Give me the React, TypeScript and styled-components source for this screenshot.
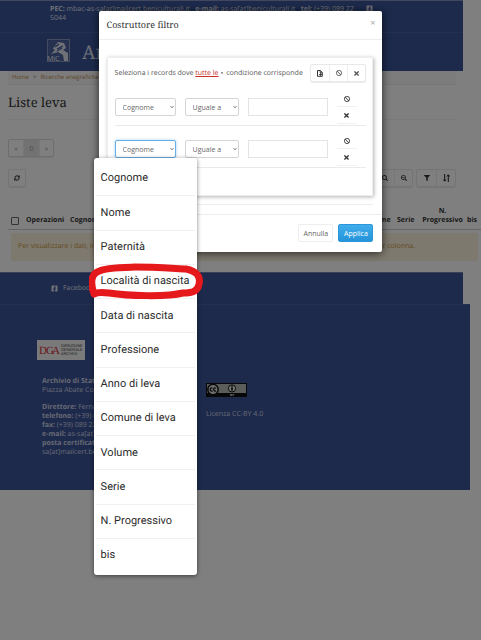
import React from "react";
import styled, { createGlobalStyle, css } from "styled-components";
import {
  FaBan,
  FaCaretDown,
  FaChevronDown,
  FaFacebookSquare,
  FaFilter,
  FaSearch,
  FaSearchMinus,
  FaTimes,
} from "react-icons/fa";
import { LuRefreshCw } from "react-icons/lu";

const Global = createGlobalStyle`
  *, *::before, *::after { box-sizing: border-box; }
  body {
    margin: 0;
    background: #fff;
    color: #333;
    font: 7px/9px "Open Sans", sans-serif;
    text-rendering: geometricPrecision;
  }
  h1, h2, p, ul { margin: 0; padding: 0; font-weight: 400; }
  button, input, select { font: inherit; color: inherit; margin: 0; }
  a { color: inherit; text-decoration: none; }
  svg { display: block; flex: none; }
`;

const serif = css`
  font-family: "Noto Serif", "DejaVu Serif", serif;
`;

const Page = styled.div`
  position: relative;
  min-height: 100vh;
  overflow: hidden;
`;

const Header = styled.header`
  margin-right: 18px;
  background: #3b5499;
  color: #dde1ec;
  border-top: 1px solid #8290bb;
`;

const Contacts = styled.div`
  display: flex;
  justify-content: space-between;
  height: 32px;
  padding: 4px 90px 0 50px;
  border-bottom: 1px solid #48609f;
`;

const ContactText = styled.p`
  max-width: 304px;
`;

const Brand = styled.div`
  display: flex;
  align-items: center;
  gap: 12px;
  height: 38px;
  padding: 0 0 4px 47px;
`;

const SiteName = styled.span`
  ${serif}
  font-size: 19px;
  line-height: 24px;
  padding-top: 3px;
`;

const Crumbs = styled.nav`
  display: flex;
  gap: 4px;
  align-items: center;
  height: 14px;
  margin: 0 25px 0 8px;
  padding-left: 4px;
  background: #f8f8f8;
  border-bottom: 1px solid #eee;
  color: #777;
  font-size: 6px;
  a { color: #c28a50; }
`;

const Content = styled.main`
  padding: 0 0 11px 8px;
`;

const PageTitle = styled.h1`
  ${serif}
  height: 35px;
  margin-right: 25px;
  padding-top: 7px;
  font-size: 13px;
  line-height: 20px;
  border-bottom: 1px solid #f2f2f2;
`;

const Bar = styled.div<{ $top: number }>`
  display: flex;
  gap: 3px;
  margin: ${(p) => p.$top}px 25px 0 0;
`;

const Group = styled.div<{ $end?: boolean }>`
  display: flex;
  margin-left: ${(p) => (p.$end ? "auto" : "0")};
  border: 1px solid #e8e8e8;
  border-radius: 2px;
  box-shadow: 0 1px 1px rgba(0, 0, 0, 0.08);
`;

const ToolButton = styled.button<{ $width?: number; $active?: boolean }>`
  display: flex;
  align-items: center;
  justify-content: center;
  width: ${(p) => p.$width ?? 18}px;
  height: 16px;
  padding: 0;
  border: 0;
  background: ${(p) => (p.$active ? "#e4e4e4" : "transparent")};
  & + & { border-left: 1px solid #eee; }
`;

const Pager = styled(Group)`
  border-color: #dcdcdc;
  color: #999;
`;

const Results = styled.table`
  width: 100%;
  margin-top: 18px;
  border-collapse: collapse;
  table-layout: fixed;
  th {
    height: 24px;
    padding: 0 0 4px;
    vertical-align: bottom;
    text-align: left;
    font-weight: 700;
    line-height: 9px;
    border-bottom: 1px solid #ccc;
  }
  th.center { text-align: center; }
  td { padding: 3px 3px 0; }
`;

const Tick = styled.input`
  appearance: none;
  display: block;
  width: 8px;
  height: 8px;
  margin-left: 3px;
  border: 1px solid #666;
  border-radius: 1px;
`;

const Notice = styled.p`
  display: flex;
  justify-content: space-between;
  height: 28px;
  padding: 9px 63px 0 7px;
  background: #fcf3dc;
  border-radius: 2px;
  color: #c9963f;
`;

const Social = styled.div`
  display: flex;
  align-items: center;
  height: 32px;
  margin-right: 18px;
  padding-left: 51px;
  background: #3b5499;
  border-top: 1px solid #7482ad;
  color: #dde1ec;
  a { display: flex; align-items: center; gap: 5px; }
`;

const Footer = styled.footer`
  display: grid;
  grid-template-columns: 164px 1fr;
  margin-right: 11px;
  height: 186px;
  padding: 35px 0 0 42px;
  background: #3b5499;
  border-top: 1px solid #4a61a2;
  color: #cdd3e4;
`;

const DgaLogo = styled.svg`
  margin: 0 0 17px -5px;
`;

const Address = styled.address`
  font-style: normal;
  white-space: nowrap;
  p + p { margin-top: 8px; }
`;

const License = styled.div`
  padding-top: 43px;
  p { margin-top: 13px; }
`;

const Backdrop = styled.div`
  position: absolute;
  inset: 0;
  display: flex;
  justify-content: center;
  align-items: flex-start;
  padding-top: 11px;
  background: rgba(0, 0, 0, 0.5);
`;

const Dialog = styled.section`
  width: 59%;
  background: #fff;
  border-radius: 2px;
  box-shadow: 0 1px 8px rgba(0, 0, 0, 0.7);
`;

const DialogHead = styled.header`
  display: flex;
  justify-content: space-between;
  height: 29px;
  padding: 7px 7px 0 8px;
  border-bottom: 1px solid #eee;
`;

const DialogTitle = styled.h2`
  ${serif}
  font-size: 9px;
  line-height: 14px;
`;

const Close = styled.button`
  height: 9px;
  padding: 0;
  border: 0;
  background: none;
  color: #aaa;
  font-size: 9px;
`;

const DialogBody = styled.div`
  padding: 17px 9px 0 8px;
`;

const Builder = styled.div`
  height: 139px;
  padding: 6px 6px 0 7px;
  border: 1px solid #eee;
  box-shadow: 1px 1px 4px rgba(0, 0, 0, 0.3);
`;

const Rule = styled.hr`
  margin: 8px 0 0;
  border: 0;
  border-top: 1px solid #eee;
`;

const Sentence = styled.div`
  display: flex;
  align-items: center;
  justify-content: space-between;
  height: 18px;
  margin-bottom: 2px;
  color: #555;
  a {
    color: #c9302c;
    text-decoration: underline;
  }
  span > svg { display: inline-block; color: #333; }
`;

const Condition = styled.div`
  display: grid;
  grid-template-columns: 61px 54px 80px 18px;
  column-gap: 9px;
  align-items: end;
  height: 42px;
  padding-bottom: 9px;
  border-bottom: 1px solid #eaeaea;
`;

const Field = styled.div`
  position: relative;
  color: #666;
  & > svg {
    position: absolute;
    right: 2px;
    top: 7px;
    pointer-events: none;
  }
`;

const Picker = styled.select<{ $focus?: boolean }>`
  appearance: none;
  display: block;
  width: 100%;
  height: 18px;
  padding: 0 7px;
  border: 1px solid ${(p) => (p.$focus ? "#66afe9" : "#d5d5d5")};
  border-radius: 2px;
  background: #fff;
  outline: 0;
  box-shadow: ${(p) => (p.$focus ? "0 0 3px rgba(102,175,233,.6)" : "none")};
`;

const Value = styled.input`
  width: 100%;
  height: 18px;
  padding: 0 4px;
  border: 1px solid #e4e4e4;
  background: #fff;
`;

const RowActions = styled.div`
  display: grid;
  gap: 1px;
  margin: 0 0 -8px;
`;

const MiniButton = styled.button`
  display: flex;
  align-items: center;
  justify-content: center;
  width: 20px;
  height: 16px;
  padding: 0;
  border: 0;
  border-bottom: 1px solid #f1f1f1;
  background: none;
`;

const DialogFoot = styled.footer`
  display: flex;
  justify-content: flex-end;
  gap: 5px;
  height: 38px;
  margin-top: 9px;
  padding: 9px 9px 0 0;
  border-top: 1px solid #eee;
`;

const Action = styled.button<{ $primary?: boolean }>`
  width: 35px;
  height: 18px;
  padding: 0;
  border: 1px solid ${(p) => (p.$primary ? "#2b97da" : "#eee")};
  border-radius: 2px;
  background: ${(p) => (p.$primary ? "linear-gradient(#41adec, #2593da)" : "#fff")};
  color: ${(p) => (p.$primary ? "#fff" : "#666")};
`;

const Options = styled.ul`
  position: absolute;
  z-index: 2;
  top: 18px;
  left: -21px;
  display: grid;
  grid-auto-rows: 1fr;
  width: 103px;
  height: 417px;
  padding: 3px 2px;
  border-radius: 3px;
  background: #fff;
  box-shadow: 0 1px 4px rgba(0, 0, 0, 0.5);
  list-style: none;
`;

const Option = styled.li`
  position: relative;
  display: flex;
  align-items: center;
  padding-left: 5px;
  color: #2c2c2c;
  font: 11px/14px Roboto, sans-serif;
  white-space: nowrap;
  & + & { border-top: 1px solid #f0f0f0; }
`;

const Marker = styled.svg`
  position: absolute;
  z-index: 1;
  left: -7px;
  top: -2px;
`;

const fields = [
  "Cognome", "Nome", "Paternità", "Località di nascita", "Data di nascita", "Professione",
  "Anno di leva", "Comune di leva", "Volume", "Serie", "N. Progressivo", "bis",
];

const MicMark = () => (
  <svg width="23" height="23" viewBox="0 0 23 23" aria-label="MiC">
    <rect x="0.5" y="0.5" width="22" height="22" fill="#4b629f" stroke="#8997be" />
    <path d="M7 8 11 3l6 1 2 5-3 2 5 3v8h-4l-1-6-5-3-7 2 4-4-2-1z" fill="#dfe3ee" />
    <path d="m8 8 4-3m-2 5 6-3m-6 5 5-3" stroke="#3b5499" strokeWidth="1.2" />
    <text x="0" y="22" fontSize="7" fontFamily="Open Sans, sans-serif" fill="#f1f3f8">MiC</text>
  </svg>
);

const Dga = () => (
  <DgaLogo width="48" height="20" viewBox="0 0 48 20" aria-label="DGA Direzione Generale Archivi">
    <rect width="48" height="20" fill="#f5f5f5" />
    <g fontSize="11" fontFamily="Liberation Serif, serif" fill="#d4303a">
      <text x="2" y="14">D</text>
      <text x="9" y="14">G</text>
      <text x="15" y="14">A</text>
    </g>
    <g fontSize="4" fontFamily="Liberation Sans, sans-serif" fill="#333">
      <text x="24" y="7">DIREZIONE</text>
      <text x="24" y="11">GENERALE</text>
      <text x="24" y="15">ARCHIVI</text>
    </g>
  </DgaLogo>
);

const CcBadge = () => (
  <svg width="41" height="14" viewBox="0 0 41 14" aria-label="Creative Commons BY">
    <rect width="41" height="14" fill="#111" />
    <rect x="1" y="1" width="39" height="9" fill="#b6bab4" />
    <circle cx="7" cy="6.5" r="5.2" fill="#ddd" stroke="#111" strokeWidth="1.5" />
    <path d="M6.5 5.3a1.5 1.5 0 1 0 0 2.4M10 5.3a1.5 1.5 0 1 0 0 2.4" fill="none" stroke="#111" strokeWidth="1.2" />
    <circle cx="26" cy="5.4" r="3.6" fill="#eee" stroke="#111" />
    <circle cx="26" cy="3.4" r="0.8" fill="#111" />
    <path d="M25 4.5h2v2h-.5v2h-1v-2H25z" fill="#111" />
    <text x="24" y="13" fontSize="3" fontWeight="700" fontFamily="Liberation Sans, sans-serif" fill="#fff">BY</text>
  </svg>
);

const SortIcon = () => (
  <svg width="7" height="8" viewBox="0 0 7 8" fill="none" stroke="#222">
    <path d="M1.7 0v7M.3 5.5l1.4 1.7 1.4-1.7M5.3 8V1M3.9 2.5 5.3.8l1.4 1.7" />
  </svg>
);

const AddIcon = () => (
  <svg width="6" height="7" viewBox="0 0 6 7" fill="none" stroke="#333">
    <path d="M3 6.3H.5V.5h2.8l2 2V6.3H3M3.2.5v2.3h2M3.5 3.2v2.6M2.2 4.5h2.6" />
  </svg>
);

function ConditionRow({ name, open }: { name: string; open?: boolean }) {
  return (
    <Condition>
      <Field>
        <Picker aria-label={`${name}: campo`} $focus={open} defaultValue="Cognome">
          {fields.map((f) => <option key={f}>{f}</option>)}
        </Picker>
        <FaChevronDown size={4} />
        {open && (
          <Options role="listbox" aria-label="Campi">
            {fields.map((f) => (
              <Option key={f} role="option" aria-selected={f === "Cognome"}>
                {f}
                {f === "Località di nascita" && (
                  <Marker width="116" height="38" viewBox="0 0 116 38" fill="none" aria-hidden="true">
                    <path
                      d="M5 31C2 22 1 13 8 9C22 1 74 5 97 6C107 8 112 13 110 21C109 28 104 30 94 30C78 34 39 33 20 30C12 29 8 29 5 31"
                      stroke="#e5191c"
                      strokeWidth="7"
                      strokeLinejoin="round"
                      strokeLinecap="round"
                    />
                  </Marker>
                )}
              </Option>
            ))}
          </Options>
        )}
      </Field>
      <Field>
        <Picker aria-label={`${name}: operatore`}><option>Uguale a</option></Picker>
        <FaChevronDown size={4} />
      </Field>
      <Value aria-label={`${name}: valore`} />
      <RowActions>
        <MiniButton aria-label="Disattiva"><FaBan size={6} /></MiniButton>
        <MiniButton aria-label="Rimuovi"><FaTimes size={7} /></MiniButton>
      </RowActions>
    </Condition>
  );
}

export default function App() {
  return (
    <Page>
      <Global />
      <Header>
        <Contacts>
          <ContactText>
            <b>PEC:</b> mbac-as-sa[at]mailcert.beniculturali.it &nbsp; <b>e-mail:</b> as-sa[at]beniculturali.it &nbsp; <b>tel:</b> (+39) 089 22 5044
          </ContactText>
          <a href="#facebook" aria-label="Facebook"><FaFacebookSquare size={7} /></a>
        </Contacts>
        <Brand>
          <MicMark />
          <SiteName>Archivio</SiteName>
        </Brand>
      </Header>
      <Crumbs>
        <a href="#home">Home</a><span>&gt;</span>
        <a href="#ricerche">Ricerche anagrafiche</a><span>&gt;</span>
      </Crumbs>
      <Content>
        <PageTitle>Liste leva</PageTitle>
        <Bar $top={19}>
          <Pager>
            <ToolButton $width={14} aria-label="Precedente">«</ToolButton>
            <ToolButton $width={16} $active>0</ToolButton>
            <ToolButton $width={14} aria-label="Successiva">»</ToolButton>
          </Pager>
        </Bar>
        <Bar $top={12}>
          <Group><ToolButton aria-label="Aggiorna" $width={16}><LuRefreshCw size={6} strokeWidth={4} /></ToolButton></Group>
          <Group $end>
            <ToolButton aria-label="Cerca"><FaSearch size={6} /></ToolButton>
            <ToolButton aria-label="Azzera ricerca"><FaSearchMinus size={6} /></ToolButton>
          </Group>
          <Group>
            <ToolButton aria-label="Filtro" $width={19}><FaFilter size={6} /></ToolButton>
            <ToolButton aria-label="Ordina" $width={19}><SortIcon /></ToolButton>
          </Group>
        </Bar>
        <Results>
          <colgroup>
            <col width="18" /><col width="44" /><col width="44" /><col />
            <col width="33" /><col width="21" /><col width="49" /><col width="14" />
          </colgroup>
          <thead>
            <tr>
              <th><Tick type="checkbox" aria-label="Seleziona tutto" /></th>
              <th>Operazioni</th><th>Cognome</th><th>Nome</th>
              <th>Volume</th><th>Serie</th>
              <th className="center">N.<br />Progressivo</th><th>bis</th>
            </tr>
          </thead>
          <tbody>
            <tr>
              <td colSpan={8}>
                <Notice>
                  <span>Per visualizzare i dati, inserire un criterio</span>
                  <span>di ricerca o un filtro per colonna.</span>
                </Notice>
              </td>
            </tr>
          </tbody>
        </Results>
      </Content>
      <Social><a href="#fb"><FaFacebookSquare size={7} />Facebook</a></Social>
      <Footer>
        <div>
          <Dga />
          <Address>
            <p><b>Archivio di Stato</b><br />Piazza Abate Conforti</p>
            <p>
              <b>Direttore:</b> Fernanda<br />
              <b>telefono:</b> (+39) 089<br />
              <b>fax:</b> (+39) 089 22<br />
              <b>e-mail:</b> as-sa[at]beni<br />
              <b>posta certificata:</b><br />
              sa[at]mailcert.beni
            </p>
          </Address>
        </div>
        <License>
          <CcBadge />
          <p>Licenza CC-BY 4.0</p>
        </License>
      </Footer>
      <Backdrop>
        <Dialog role="dialog" aria-labelledby="filter-title">
          <DialogHead>
            <DialogTitle id="filter-title">Costruttore filtro</DialogTitle>
            <Close aria-label="Chiudi">×</Close>
          </DialogHead>
          <DialogBody>
            <Builder>
              <Sentence>
                <span>Seleziona i records dove <a href="#tutte">tutte le</a> <FaCaretDown size={4} /> condizione corrisponde</span>
                <Group>
                  <ToolButton aria-label="Aggiungi"><AddIcon /></ToolButton>
                  <ToolButton aria-label="Disattiva gruppo"><FaBan size={6} /></ToolButton>
                  <ToolButton aria-label="Rimuovi gruppo"><FaTimes size={7} /></ToolButton>
                </Group>
              </Sentence>
              <ConditionRow name="Condizione 1" />
              <ConditionRow name="Condizione 2" open />
            </Builder>
            <Rule />
          </DialogBody>
          <DialogFoot>
            <Action>Annulla</Action>
            <Action $primary>Applica</Action>
          </DialogFoot>
        </Dialog>
      </Backdrop>
    </Page>
  );
}
